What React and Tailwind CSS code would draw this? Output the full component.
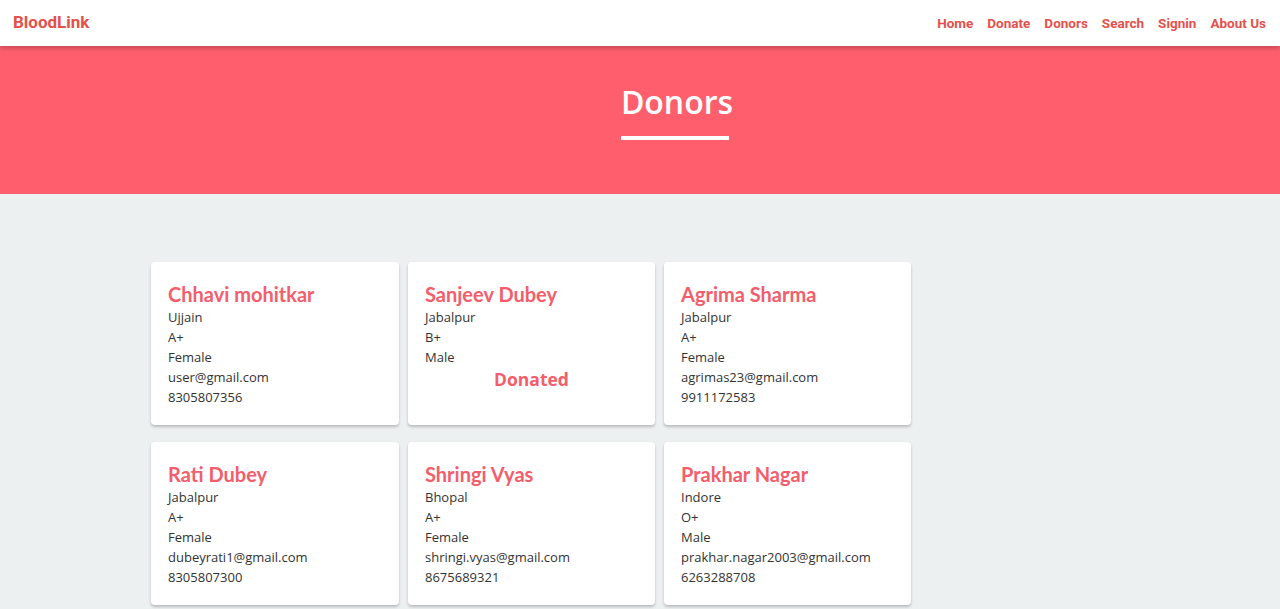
import React from "react";

const donors = [
  { name: "Chhavi mohitkar", city: "Ujjain", group: "A+", gender: "Female", email: "user@gmail.com", phone: "8305807356" },
  { name: "Sanjeev Dubey", city: "Jabalpur", group: "B+", gender: "Male", donated: true },
  { name: "Agrima Sharma", city: "Jabalpur", group: "A+", gender: "Female", email: "agrimas23@gmail.com", phone: "9911172583" },
  { name: "Rati Dubey", city: "Jabalpur", group: "A+", gender: "Female", email: "dubeyrati1@gmail.com", phone: "8305807300" },
  { name: "Shringi Vyas", city: "Bhopal", group: "A+", gender: "Female", email: "shringi.vyas@gmail.com", phone: "8675689321" },
  { name: "Prakhar Nagar", city: "Indore", group: "O+", gender: "Male", email: "prakhar.nagar2003@gmail.com", phone: "6263288708" },
];

export default function App() {
  return (
    <div className="min-h-[609px] bg-[#ecf0f1]" style={{ fontFamily: "'Open Sans', 'Noto Sans', sans-serif" }}>
      <nav className="relative z-10 flex h-[46px] items-center justify-between bg-white pl-[13px] pr-[14px] shadow-[0_2px_5px_rgba(0,0,0,0.25)]" style={{ fontFamily: "Roboto, sans-serif" }}>
        <div className="text-[17px] font-bold text-[#e4514b]">BloodLink</div>
        <ul className="flex gap-[14px] text-[13.5px] font-bold leading-[16px] text-[#e4514b]">
          <li>Home</li>
          <li>Donate</li>
          <li>Donors</li>
          <li>Search</li>
          <li>Signin</li>
          <li>About Us</li>
        </ul>
      </nav>
      <header className="flex h-[148px] flex-col items-center bg-[#ff5f6d] pl-[74px] pt-[28px]">
        <h1 className="text-[32px] font-semibold leading-[56px] text-white">Donors</h1>
        <div className="ml-[-4px] mt-[6px] h-[4px] w-[108px] bg-white" />
      </header>
      <main className="pl-[151px] pt-[68px] pb-[4px]">
        <div className="grid grid-cols-[248px_247px_247px] gap-x-[9px] gap-y-[17px]">
          {donors.map((d) => (
            <div key={d.name} className="h-[163px] rounded-[4px] bg-white px-[17px] pt-[19px] shadow-[0_2px_3px_rgba(0,0,0,0.22)]">
              <h2 className="text-[20px] font-bold leading-[26px] text-[#f45d6b]" style={{ fontFamily: "Lato, 'Open Sans', sans-serif" }}>{d.name}</h2>
              <div className="text-[13px] leading-[20px] text-[#333333]">
                <p>{d.city}</p>
                <p>{d.group}</p>
                <p>{d.gender}</p>
                {d.donated ? (
                  <p className="pt-[1px] text-center text-[17.5px] font-bold leading-[22px] text-[#f45d6b]">Donated</p>
                ) : (
                  <>
                    <p>{d.email}</p>
                    <p>{d.phone}</p>
                  </>
                )}
              </div>
            </div>
          ))}
        </div>
      </main>
    </div>
  );
}
